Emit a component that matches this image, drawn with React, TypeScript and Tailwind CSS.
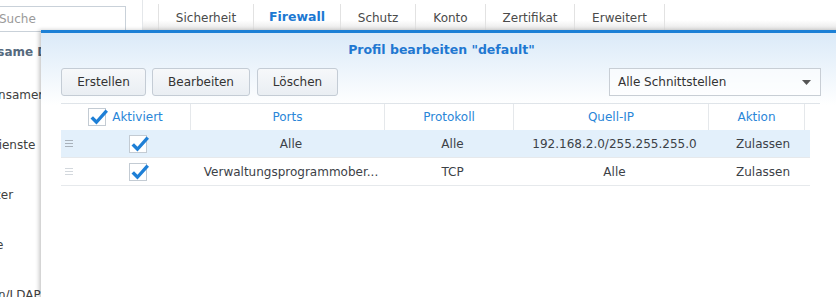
const Check = () => (
  <span className="relative inline-block w-[18px] h-[18px] border border-[#c3cbd3] bg-white shrink-0">
    <svg className="absolute left-[-1px] top-[-1px]" width="22" height="20" viewBox="0 0 22 20">
      <polygon points="2.5,10.5 5,8.2 8.5,11.8 17.5,1.5 20,3.8 8.5,16.5" fill="#1e7fd6" />
    </svg>
  </span>
);

const Handle = ({ light }: { light?: boolean }) => (
  <span className="flex flex-col gap-[2px] w-[8px]">
    <span className={`h-px w-full ${light ? "bg-[#d3d8dd]" : "bg-[#a9b2bb]"}`} />
    <span className={`h-px w-full ${light ? "bg-[#d3d8dd]" : "bg-[#a9b2bb]"}`} />
    <span className={`h-px w-full ${light ? "bg-[#d3d8dd]" : "bg-[#a9b2bb]"}`} />
  </span>
);

const tabs = [
  { label: "Sicherheit", w: "w-[95px]" },
  { label: "Firewall", w: "w-[87px]", active: true },
  { label: "Schutz", w: "w-[75px]" },
  { label: "Konto", w: "w-[70px]" },
  { label: "Zertifikat", w: "w-[89px]" },
  { label: "Erweitert", w: "w-[91px]" },
];

const rows = [
  { ports: "Alle", proto: "Alle", ip: "192.168.2.0/255.255.255.0", action: "Zulassen", selected: true },
  { ports: "Verwaltungsprogrammober...", proto: "TCP", ip: "Alle", action: "Zulassen", selected: false },
];

export default function App() {
  return (
    <div className="relative w-[836px] h-[297px] overflow-hidden bg-white text-[12px] text-[#404040] font-['DejaVu_Sans',sans-serif]">
      <div className="flex h-full">
        <aside className="w-[143px] shrink-0 border-r border-[#e4e7ea] overflow-hidden">
          <div className="pt-[6px] ml-[-8px]">
            <div className="w-[134px] h-[26px] border border-[#c9d1d9] bg-white flex items-center pl-[6px] text-[#9a9a9a]">
              Suche
            </div>
          </div>
          <div className="mt-[10px] ml-[-54px] h-[20px] flex items-center whitespace-nowrap font-bold text-[12px] text-[#566a7e]">
            Gemeinsame Dateien
          </div>
          <div className="mt-[8px] ml-[-41px] whitespace-nowrap">
            {["Gemeinsamer Ordner", "Dateidienste", "Benutzer", "Gruppe", "Domain/LDAP"].map((t) => (
              <div key={t} className="h-[50px] flex items-center">
                {t}
              </div>
            ))}
          </div>
        </aside>
        <main className="flex-1">
          <div className="h-[31px] pl-[15px] flex bg-[linear-gradient(to_bottom,#ffffff_65%,#e4e4e4)]">
            {tabs.map((t, i) => (
              <div
                key={t.label}
                className={`${t.w} mt-[4px] h-[27px] border-l border-[#e2e2e2] ${i === tabs.length - 1 ? "border-r" : ""} flex items-center justify-center ${
                  t.active ? "font-bold text-[12.5px] text-[#1c78d2]" : "text-[#4a4a4a]"
                }`}
              >
                {t.label}
              </div>
            ))}
          </div>
        </main>
      </div>

      {/* dialog */}
      <div className="absolute left-[41px] top-[30px] w-[801px] h-[290px] border-t-[3px] border-[#1c80d6] shadow-[-2px_0_4px_rgba(0,0,0,0.22)] bg-[linear-gradient(to_bottom,#dbeaf8,#ffffff_72px)]">
        <div className="h-[35px] flex items-center justify-center font-bold text-[12.5px] text-[#1f78d1]">
          Profil bearbeiten "default"
        </div>
        <div className="flex items-center justify-between pl-[20px] pr-[21px]">
          <div className="flex">
            <button className="w-[85px] h-[28px] border border-[#c4ccd5] rounded-[3px] bg-[linear-gradient(to_bottom,#f6f8fa,#e9eef3)] text-[#333]">
              Erstellen
            </button>
            <button className="ml-[6px] w-[98px] h-[28px] border border-[#c4ccd5] rounded-[3px] bg-[linear-gradient(to_bottom,#f6f8fa,#e9eef3)] text-[#333]">
              Bearbeiten
            </button>
            <button className="ml-[7px] w-[81px] h-[28px] border border-[#c4ccd5] rounded-[3px] bg-[linear-gradient(to_bottom,#f6f8fa,#e9eef3)] text-[#333]">
              Löschen
            </button>
          </div>
          <div className="w-[212px] h-[28px] border border-[#c8ced5] bg-white/60 flex items-center justify-between pl-[8px] pr-[9px] text-[#333]">
            <span>Alle Schnittstellen</span>
            <svg width="9" height="5" viewBox="0 0 9 5">
              <polygon points="0,0 9,0 4.5,5" fill="#555" />
            </svg>
          </div>
        </div>

        {/* table */}
        <div className="mt-[7px] ml-[20px]">
          <div className="w-[759px] h-[27px] border-t border-[#dfe4e9] flex text-[#2a86d8]">
            <div className="w-[129px] flex items-center justify-center gap-[6px]">
              <Check />
              <span>Aktiviert</span>
            </div>
            <div className="w-[194px] border-l border-[#e5e8eb] flex items-center justify-center">Ports</div>
            <div className="w-[129px] border-l border-[#e5e8eb] flex items-center justify-center">Protokoll</div>
            <div className="w-[195px] border-l border-[#e5e8eb] flex items-center justify-center">Quell-IP</div>
            <div className="w-[96px] border-l border-[#e5e8eb] flex items-center justify-center">Aktion</div>
            <div className="flex-1 border-l border-[#e5e8eb]" />
          </div>
          {rows.map((r, i) => (
            <div
              key={i}
              className={`w-[749px] h-[28px] border-b border-[#e6e9ec] flex items-center text-[#3c4147] ${
                r.selected ? "bg-[#e3f0fb]" : ""
              }`}
            >
              <div className="w-[129px] flex items-center pl-[4px]">
                <Handle light={!r.selected} />
                <span className="ml-[56px] flex">
                  <Check />
                </span>
              </div>
              <div className="w-[194px] pl-[8px] text-center whitespace-nowrap">{r.ports}</div>
              <div className="w-[129px] pl-[8px] text-center">{r.proto}</div>
              <div className="w-[195px] pl-[8px] text-center">{r.ip}</div>
              <div className="w-[102px] pl-[8px] text-center">{r.action}</div>
            </div>
          ))}
        </div>
      </div>
    </div>
  );
}
